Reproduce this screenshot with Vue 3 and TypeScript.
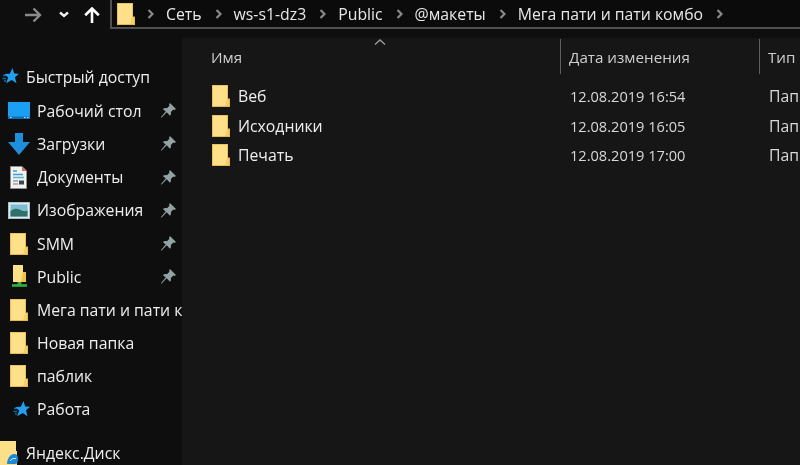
<script setup lang="ts">
type NavItem = { label: string; icon: string; pinned?: boolean };

const navItems: NavItem[] = [
  { label: "Рабочий стол", icon: "desktop", pinned: true },
  { label: "Загрузки", icon: "download", pinned: true },
  { label: "Документы", icon: "docs", pinned: true },
  { label: "Изображения", icon: "pics", pinned: true },
  { label: "SMM", icon: "folder", pinned: true },
  { label: "Public", icon: "netfolder", pinned: true },
  { label: "Мега пати и пати комбо", icon: "folder" },
  { label: "Новая папка", icon: "folder" },
  { label: "паблик", icon: "folder" },
  { label: "Работа", icon: "star" },
];

const crumbs = ["Сеть", "ws-s1-dz3", "Public", "@макеты", "Мега пати и пати комбо"];

const files = [
  { name: "Веб", date: "12.08.2019 16:54", type: "Папка с файлами" },
  { name: "Исходники", date: "12.08.2019 16:05", type: "Папка с файлами" },
  { name: "Печать", date: "12.08.2019 17:00", type: "Папка с файлами" },
];
</script>

<template>
  <div class="window">
    <header class="toolbar">
      <div class="nav-buttons">
        <svg class="back" width="18" height="16" viewBox="0 0 18 16"><path d="M1 8h15M9.500 1.500 16 8l-6.500 6.500" fill="none" stroke="#8a8a8a" stroke-width="2.400" /></svg>
        <svg class="recent" width="10" height="7" viewBox="0 0 10 7"><path d="M1 1.500 5 5l4-3.500" fill="none" stroke="#f0f0f0" stroke-width="2.400" /></svg>
        <svg class="up" width="16" height="16" viewBox="0 0 16 16"><path d="M8 16V2M1.200 8.200 8 1.500l6.800 6.700" fill="none" stroke="#fff" stroke-width="2.600" /></svg>
      </div>
      <div class="address">
        <svg class="addr-folder" width="18" height="22" viewBox="0 0 18 22"><use href="#folder-shape" /></svg>
        <template v-for="c in crumbs" :key="c">
          <svg class="chev" width="7" height="10" viewBox="0 0 7 10"><path d="M1.500 1l4 4-4 4" fill="none" stroke="#8a8a8a" stroke-width="2.200" /></svg>
          <span class="crumb">{{ c }}</span>
        </template>
        <svg class="chev" width="7" height="10" viewBox="0 0 7 10"><path d="M1.500 1l4 4-4 4" fill="none" stroke="#8a8a8a" stroke-width="2.200" /></svg>
      </div>
    </header>

    <div class="body">
      <aside class="sidebar">
        <div class="nav-row top">
          <svg class="nav-ico" width="18" height="17" viewBox="0 0 18 17"><use href="#star-shape" /></svg>
          <span>Быстрый доступ</span>
        </div>
        <div v-for="item in navItems" :key="item.label" class="nav-row item">
          <span class="ico-box">
            <svg v-if="item.icon === 'desktop'" width="22" height="17" viewBox="0 0 22 17"><rect width="22" height="17" fill="#1b9ff2" /><rect y="14.500" width="22" height="2.500" fill="#0e6fb8" /><path d="M2 15.500h1.500M16 15.500h1.500M19 15.500h1.500" stroke="#cfe8fa" /></svg>
            <svg v-else-if="item.icon === 'download'" class="dl" width="22" height="22" viewBox="0 0 22 22"><path d="M7 0h8v9h7L11 22 0 9h7z" fill="#1e8fdc" /></svg>
            <svg v-else-if="item.icon === 'docs'" class="doc" width="17" height="23" viewBox="0 0 17 23"><path d="M.5.500H12L16.500 5v17.500H.5z" fill="#f2f2ee" stroke="#8f8f8f" /><path d="M3 5h4M3 8.500h10" stroke="#3f9ddb" stroke-width="1.500" /><path d="M3 11.500h11" stroke="#5ab5d8" stroke-width="1.500" /><path d="M3 15h5M3 18h5" stroke="#777" /><path d="M9 14.500h5v4H9z" fill="#3a4a55" /><path d="M12 .5v4.500h4.500" fill="#c9705c" /></svg>
            <svg v-else-if="item.icon === 'pics'" width="22" height="17" viewBox="0 0 22 17"><rect x=".5" y=".5" width="21" height="16" fill="#dfeaf0" stroke="#aebfc9" /><rect x="2.500" y="2.500" width="17" height="12" fill="#7fbcd4" /><path d="M2.500 9c4-3 7-2.500 10-1s5 1.500 7 .5v6h-17z" fill="#2f7068" /></svg>
            <svg v-else-if="item.icon === 'star'" class="st" width="18" height="17" viewBox="0 0 18 17"><use href="#star-shape" /></svg>
            <svg v-else-if="item.icon === 'netfolder'" class="net" width="15" height="23" viewBox="0 0 15 23"><path d="M1 0h10v7h3v10H1z" fill="#fddf88" /><path d="M11 7h3v10H9z" fill="#efc24e" /><path d="M7.500 17v3" stroke="#2fa838" stroke-width="4" /><path d="M0 20.500h15" stroke="#2fb83f" stroke-width="2.500" /></svg>
            <svg v-else class="fold" width="18" height="22" viewBox="0 0 18 22"><use href="#folder-shape" /></svg>
          </span>
          <span class="nav-label">{{ item.label }}</span>
          <svg v-if="item.pinned" class="pin" width="15" height="15" viewBox="0 0 16 16"><path d="M9.500 0 16 6.500l-1.800 1-1-.6-2.700 2.700c.4 1.800 0 3.100-.9 4L6.100 9.900 1.200 15 0 15.800 0 14.800 5 9 2 6.500C3 5.500 4.500 5.100 6.300 5.500L9 2.800l-.4-1z" fill="#93a3a3" /></svg>
        </div>
        <div class="nav-row disk">
          <svg class="disk-ico" width="18" height="24" viewBox="0 0 18 24"><path d="M0 0h16v10h1v14H0z" fill="#fddf88" /><path d="M7 23c0-6 4-10 7-10s4 2 4 5-1 5-3 5z" fill="#1e88d8" /><path d="M10 20c1-1.500 3-3 6-2.500" stroke="#d8eefa" fill="none" /></svg>
          <span>Яндекс.Диск</span>
        </div>
      </aside>

      <main class="content">
        <svg class="sort" width="12" height="6" viewBox="0 0 12 6"><path d="M1 5.500 6 1l5 4.500" fill="none" stroke="#9a9a9a" stroke-width="1.400" /></svg>
        <div class="columns head">
          <span class="c-name">Имя</span>
          <span class="c-date">Дата изменения</span>
          <span class="c-type">Тип</span>
        </div>
        <div class="rows">
          <div v-for="f in files" :key="f.name" class="columns row">
            <span class="c-name">
              <svg class="row-folder" width="18" height="22" viewBox="0 0 18 22"><use href="#folder-shape" /></svg>
              {{ f.name }}
            </span>
            <span class="c-date">{{ f.date }}</span>
            <span class="c-type">{{ f.type }}</span>
          </div>
        </div>
      </main>
    </div>

    <svg class="defs" width="0" height="0">
      <defs>
        <g id="folder-shape">
          <path d="M0 0h16v13.500h2V22H0z" fill="#e9b84a" />
          <path d="M.8.800h14.400v13.400l-1.700 6.900H.8z" fill="#fee08a" />
          <path d="M15.200 14.500H17V21h-3.500z" fill="#f5cf6a" />
        </g>
        <g id="star-shape">
          <path d="M11.500 0l1.700 5.600 4.800.2-4 3.500 1.500 6-4.800-3.300-5.500 3.300 1.900-5.900L3 6l5.800-.3z" fill="#1f9fee" />
          <path d="M2 7.500h3M1.500 10.500h3.500M3 13h2" stroke="#15689f" stroke-width="1.300" />
        </g>
      </defs>
    </svg>
  </div>
</template>

<style>
html,
body {
  margin: 0;
  background: #0e0e0e;
}
</style>

<style scoped>
.window {
  width: 800px;
  height: 465px;
  overflow: hidden;
  background: #0e0e0e;
  color: #eeeeee;
  font-family: "Open Sans", "Noto Sans", sans-serif;
  font-size: 15.800px;
  display: flex;
  flex-direction: column;
  filter: blur(0.4px);
}

.toolbar {
  height: 38px;
  display: flex;
  align-items: flex-start;
  flex: none;
}

.nav-buttons {
  width: 110px;
  height: 29px;
  display: flex;
  align-items: center;
  flex: none;
}

.back {
  margin-left: 24px;
}

.recent {
  margin-left: 17px;
}

.up {
  margin-left: 15px;
}

.address {
  flex: 1;
  height: 29px;
  box-sizing: border-box;
  border-left: 2px solid #505050;
  border-bottom: 2px solid #505050;
  background: #0b0b0b;
  display: flex;
  align-items: center;
  padding-left: 5px;
  white-space: nowrap;
}

.addr-folder {
  flex: none;
  margin-right: 12px;
}

.chev {
  flex: none;
  margin-right: 12px;
}

.crumb {
  margin-right: 13px;
  color: #e8e8e8;
}

.body {
  flex: 1;
  display: flex;
  min-height: 0;
}

.sidebar {
  width: 182px;
  flex: none;
  box-sizing: border-box;
  padding-top: 23px;
  overflow: hidden;
}

.nav-row {
  height: 33.200px;
  display: flex;
  align-items: center;
  white-space: nowrap;
}

.nav-row.top {
  padding-left: 1px;
  gap: 7px;
  margin-top: -1px;
  margin-bottom: 1px;
}

.item {
  padding-left: 8px;
}

.ico-box {
  width: 29px;
  flex: none;
  display: flex;
  align-items: center;
}

.fold {
  margin-left: 2px;
}

.net {
  margin-left: 4px;
}

.doc {
  margin-left: 2px;
}

.st {
  margin-left: 4px;
}

.nav-label {
  flex: 1;
  min-width: 0;
  overflow: hidden;
}

.pin {
  flex: none;
  margin-right: 6px;
}

.disk {
  margin-top: 10px;
  gap: 8px;
}

.content {
  flex: 1;
  min-width: 0;
  position: relative;
  background: #161616;
  overflow: hidden;
}

.sort {
  position: absolute;
  left: 192px;
  top: 1px;
}

.columns {
  display: grid;
  grid-template-columns: 378px 199px 1fr;
  white-space: nowrap;
}

.head {
  height: 35px;
  align-items: center;
  color: #cfcfcf;
  font-size: 15.200px;
  margin-top: 1px;
}

.head span {
  height: 35px;
  display: flex;
  align-items: center;
  padding-left: 8px;
  box-sizing: border-box;
}

.head .c-name {
  padding-left: 29px;
}

.head .c-date,
.head .c-type {
  border-left: 1px solid #5e5e5e;
}

.rows {
  padding-top: 7px;
}

.row {
  height: 29.700px;
  align-items: center;
}

.row .c-name {
  display: flex;
  align-items: center;
  gap: 8px;
  padding-left: 30px;
}

.row .c-date {
  padding-left: 10px;
  color: #d8d8d8;
  font-size: 14.600px;
}

.row .c-type {
  padding-left: 10px;
  color: #d8d8d8;
}

.row-folder {
  flex: none;
}

.defs {
  position: absolute;
}
</style>
